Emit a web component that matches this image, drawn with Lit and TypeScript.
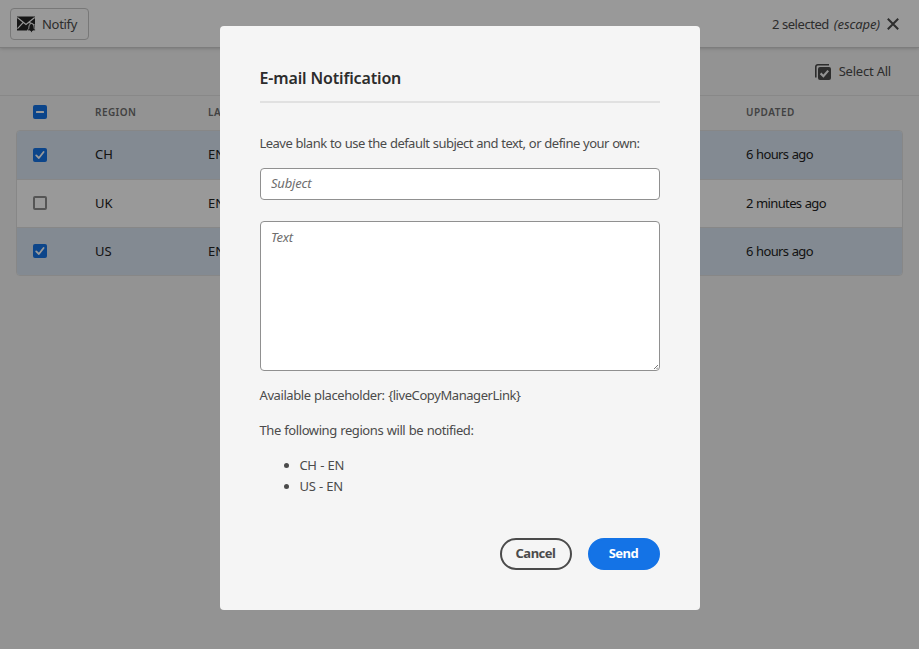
import { LitElement, html, css, svg } from "lit";
import { customElement } from "lit/decorators.js";
import { classMap } from "lit/directives/class-map.js";

interface Row {
  region: string;
  language: string;
  updated: string;
  selected: boolean;
}

const ROWS: Row[] = [
  { region: "CH", language: "EN", updated: "6 hours ago", selected: true },
  { region: "UK", language: "EN", updated: "2 minutes ago", selected: false },
  { region: "US", language: "EN", updated: "6 hours ago", selected: true },
];

const check = svg`<svg class="glyph" width="14" height="14" viewBox="0 0 14 14"><path d="M3.200 7.400 5.900 10 10.600 4" fill="none" stroke="#fff" stroke-width="1.8" stroke-linecap="round" stroke-linejoin="round"/></svg>`;
const dash = svg`<svg class="glyph" width="14" height="14" viewBox="0 0 14 14"><rect x="3" y="6" width="8" height="2" rx=".5" fill="#fff"/></svg>`;

@customElement("live-copy-page")
class LiveCopyPage extends LitElement {
  static styles = css`
    :host { display: block; height: 100%; background: #f5f5f5; color: #4b4b4b; }
    .bar { height: 47px; box-sizing: border-box; display: flex; align-items: center; justify-content: space-between;
      padding: 0 20px 0 10px; background: #fff; position: relative; box-shadow: 0 1px 0 #d0d0d0, 0 1px 4px rgba(0,0,0,.25); }
    .notify { display: flex; align-items: center; gap: 6px; box-sizing: border-box; width: 79px; height: 32px; padding: 0 0 0 6px;
      margin-top: 1px; border: 1px solid #c8c8c8; border-radius: 4px; background: none; font: inherit; color: inherit; letter-spacing: -.3px; }
    .notify svg { flex: none; }
    .status { display: flex; align-items: center; padding-top: 1px; }
    .count { letter-spacing: -.45px; margin-right: 5px; }
    .hint { letter-spacing: -.1px; font-style: italic; margin-right: 7px; }
    .tools { height: 48px; box-sizing: border-box; display: flex; align-items: center; justify-content: flex-end; gap: 8px;
      padding: 1px 28px 0 0; letter-spacing: -.22px; }
    .tools svg { display: block; }
    .tools span { padding-bottom: 2px; }
    .table { border-top: 1px solid #e3e3e3; padding: 0 16px; color: #222; }
    .line { display: grid; grid-template-columns: 79px 113px 538px 1fr; align-items: center; }
    .head { height: 34px; box-sizing: border-box; padding-bottom: 2px; font-size: 10px; font-weight: 600; color: #6e6e6e; letter-spacing: .45px; }
    .body { border: 1px solid #e1e1e1; border-radius: 4px; overflow: hidden; box-sizing: border-box; height: 146px; background: #fff;
      display: grid; grid-template-rows: 49px 48px 47px; }
    .body .line { box-sizing: border-box; border-bottom: 1px solid #e1e1e1; margin-left: -1px; padding-bottom: 2px; }
    .body .line:first-child .box { margin-top: 2px; }
    .body .line:last-child { border-bottom: 0; }
    .picked { background: #dae6f3; }
    .updated { letter-spacing: -.65px; word-spacing: .6px; }
    .head .updated { letter-spacing: .5px; }
    .box { width: 14px; height: 14px; box-sizing: border-box; margin-left: 17px; border-radius: 2px; border: 2px solid #8e8e8e; }
    .on { border: 0; background: #1473e6; }
    .glyph { display: block; }
  `;

  private line(r: Row) {
    return html`<div class=${classMap({ line: true, picked: r.selected })}>
      <span class=${classMap({ box: true, on: r.selected })}>${r.selected ? check : ""}</span>
      <span>${r.region}</span><span>${r.language}</span><span class="updated">${r.updated}</span>
    </div>`;
  }

  render() {
    return html`
      <header class="bar">
        <button class="notify">
          <svg width="19" height="17" viewBox="0 0 19 17">
            <path d="M0 .5h18v14H0z" fill="#252525"/>
            <path d="M.3 1.500 9 8.400l8.700-6.900M.5 12.600l5.800-6.200M17.600 9 12 6.400" fill="none" stroke="#fff" stroke-width="1.200"/>
            <path d="M14.500 7.400c1.900.5 2.600 2.100 2.600 3.800 0 1.500.4 2 1.300 2.700v1h-2.600c-.2 1.900-2.400 1.900-2.600 0h-2.600v-1c.9-.7 1.300-1.200 1.300-2.700 0-1.700.7-3.300 2.600-3.800z" fill="#252525" stroke="#fff" stroke-width="1"/>
          </svg>
          <span>Notify</span>
        </button>
        <div class="status">
          <span class="count">2 selected</span><span class="hint">(escape)</span>
          <svg width="12" height="12" viewBox="0 0 12 12"><path d="M.8.8l10.400 10.400M11.200.8.8 11.200" stroke="#4b4b4b" stroke-width="2"/></svg>
        </div>
      </header>
      <div class="tools">
        <svg width="16" height="16" viewBox="0 0 16 16">
          <path d="M.8 13.500V2.800a2 2 0 0 1 2-2H14" fill="none" stroke="#4b4b4b" stroke-width="1.600"/>
          <rect x="3" y="3" width="13" height="13" rx="2" fill="#4b4b4b"/>
          <path d="M5.600 9.400 8.400 12.200 13.200 6.600" fill="none" stroke="#f5f5f5" stroke-width="2.200"/>
        </svg>
        <span>Select All</span>
      </div>
      <section class="table">
        <div class="line head"><span class="box on">${dash}</span><span>REGION</span><span>LANGUAGE</span><span class="updated">UPDATED</span></div>
        <div class="body">${ROWS.map((r) => this.line(r))}</div>
      </section>`;
  }
}

@customElement("notify-dialog")
class NotifyDialog extends LitElement {
  static styles = css`
    :host { display: block; box-sizing: border-box; width: 480px; height: 584px; padding: 40px; border-radius: 4px;
      background: #f5f5f5; color: #4b4b4b; letter-spacing: -.53px; word-spacing: .5px; line-height: 21px; }
    h2 { margin: 0 0 30px; height: 35px; border-bottom: 2px solid #e1e1e1; font-size: 16px; line-height: 24px; font-weight: 600;
      letter-spacing: -.15px; word-spacing: 0; color: #2c2c2c; }
    p { margin: 0; height: 21px; }
    .tight { letter-spacing: -.42px; margin-bottom: 14px; }
    input, textarea { display: block; box-sizing: border-box; width: 400px; border: 1px solid #909090; border-radius: 4px; background: #fff;
      font: inherit; letter-spacing: -.2px; padding: 0 10.500px; outline: 0; }
    input { height: 32px; margin: 14px 0 21px; padding-bottom: 2px; }
    textarea { height: 150px; padding-top: 5px; resize: none; }
    .area { position: relative; margin-bottom: 14px; }
    .grip { position: absolute; right: 2px; bottom: 2px; }
    ::placeholder { color: #6e6e6e; font-style: italic; opacity: 1; }
    ul { margin: 0; padding-left: 40px; letter-spacing: -.35px; }
    footer { display: flex; justify-content: flex-end; gap: 16px; margin-top: 41px; }
    button { box-sizing: border-box; width: 72px; height: 32px; border-radius: 16px; border: 2px solid #4b4b4b; padding: 0 0 1px;
      background: none; color: #4b4b4b; font: inherit; font-weight: 700; letter-spacing: -.48px; }
    .send { background: #1473e6; border-color: #1473e6; color: #fff; }
  `;

  render() {
    return html`
      <h2>E-mail Notification</h2>
      <p>Leave blank to use the default subject and text, or define your own:</p>
      <input placeholder="Subject" />
      <div class="area">
        <textarea placeholder="Text"></textarea>
        <svg class="grip" width="4" height="4" viewBox="0 0 4 4"><path d="M0 4 4 0M2.500 4 4 2.500" stroke="#555" stroke-width=".8"/></svg>
      </div>
      <p class="tight">Available placeholder: {liveCopyManagerLink}</p>
      <p class="tight">The following regions will be notified:</p>
      <ul>${ROWS.filter((r) => r.selected).map((r) => html`<li>${r.region} - ${r.language}</li>`)}</ul>
      <footer><button>Cancel</button><button class="send">Send</button></footer>`;
  }
}

@customElement("app-root")
class AppRoot extends LitElement {
  static styles = css`
    :host { display: block; position: relative; height: 100vh; overflow: hidden; font: 13px "Noto Sans", "Open Sans", sans-serif; }
    .shade { position: absolute; inset: 0; display: flex; justify-content: center; align-items: flex-start; padding-top: 26px;
      background: rgba(0, 0, 0, .4); }
  `;

  render() {
    return html`<live-copy-page></live-copy-page><div class="shade"><notify-dialog></notify-dialog></div>`;
  }
}
